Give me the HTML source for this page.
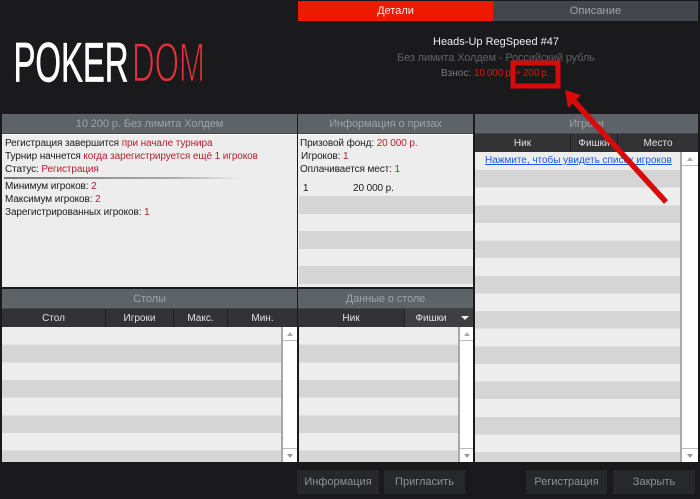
<!DOCTYPE html>
<html lang="ru">
<head>
<meta charset="utf-8">
<style>
*{box-sizing:border-box}
html,body{margin:0;padding:0;background:#1a1a1c}
body{width:700px;height:499px;position:relative;overflow:hidden;font-family:"Liberation Sans",Arial,sans-serif;font-size:10px;letter-spacing:-.1px;color:#1a1a1a}
.a{position:absolute}
.t{position:absolute;white-space:nowrap;line-height:14px}
.r{color:#b5202c}
.title{position:absolute;background:#5d6367;border-bottom:1px solid #40464a;color:#9ea3a6;text-align:center;font-size:11px;line-height:21px;height:20px;letter-spacing:-.1px}
.hd{position:absolute;background:#333335;color:#e2e2e2;text-align:center;line-height:19px;height:18px;border-right:1px solid #1f1f21;letter-spacing:0}
.btn{position:absolute;top:470px;height:24px;background:#27282c;color:#8e9094;font-size:11px;line-height:25px;text-align:center;letter-spacing:0}
.sb{position:absolute;background:#fff;border-left:2px solid #a8a8a8}
.up,.dn{position:absolute;left:0;right:0;height:14px;background:#fff}
.up{top:0;border-bottom:1px solid #bbb}
.dn{bottom:0;border-top:1px solid #bbb}
.up:after,.dn:after{content:"";position:absolute;left:50%;margin-left:-3px;width:0;height:0;border-left:3px solid transparent;border-right:3px solid transparent}
.up:after{top:5px;border-bottom:4px solid #aaa}
.dn:after{top:5px;border-top:4px solid #999}
.st1{background:repeating-linear-gradient(to bottom,#ededed 0,#ededed 17.67px,#d5d5d5 17.67px,#d5d5d5 35.33px)}
.st2{background:repeating-linear-gradient(to bottom,#d5d5d5 0,#d5d5d5 17.63px,#ededed 17.63px,#ededed 35.26px)}
</style>
</head>
<body>
<!-- tabs -->
<div class="a" style="left:298px;top:1px;width:195px;height:20px;background:#ee1a00;color:#f5ecea;text-align:center;font-size:11px;letter-spacing:0;line-height:20px">Детали</div>
<div class="a" style="left:493px;top:1px;width:205px;height:20px;background:#43474d;color:#a2a5a9;text-align:center;font-size:11px;letter-spacing:.1px;line-height:20px">Описание</div>

<!-- logo -->
<svg class="a" style="left:0;top:30px" width="220" height="60" viewBox="0 0 220 60">
<text x="13.5" y="51.5" font-family="Liberation Sans" font-size="56" fill="#fff" stroke="#fff" stroke-width=".7" textLength="115" lengthAdjust="spacingAndGlyphs">POKER</text>
<text x="132" y="51.5" font-family="Liberation Sans" font-size="56" fill="#e8303c" stroke="#1a1a1c" stroke-width="1.7" textLength="73" lengthAdjust="spacingAndGlyphs">DOM</text>
</svg>

<!-- tournament info -->
<div class="t" style="left:433px;top:35px;color:#eee;font-size:11px;letter-spacing:0">Heads-Up RegSpeed #47</div>
<div class="t" style="left:397px;top:51px;color:#5f6165;font-size:11px;letter-spacing:-.13px">Без лимита Холдем - Российский рубль</div>
<div class="t" style="left:441px;top:67px;color:#77797d;font-size:10px;letter-spacing:0">Взнос:</div>
<div class="t" style="left:474px;top:67px;color:#d8180c;font-size:10px;letter-spacing:-.02px;word-spacing:-1px">10 000 р. + 200 р.</div>

<!-- top left panel -->
<div class="title" style="left:2px;top:114px;width:295px">10 200 р. Без лимита Холдем</div>
<div class="a" style="left:2px;top:134px;width:295px;height:153px;background:#ededed;border-top:1px solid #fff"></div>
<div class="t" style="left:5px;top:137px">Регистрация завершится <span class="r">при начале турнира</span></div>
<div class="t" style="left:5px;top:150px">Турнир начнется <span class="r">когда зарегистрируется ещё 1 игроков</span></div>
<div class="t" style="left:5px;top:163px">Статус: <span class="r">Регистрация</span></div>
<div class="a" style="left:4px;top:177px;width:238px;height:2px;background:linear-gradient(to right,#777,#aaa 70%,#ededed)"></div>
<div class="t" style="left:5px;top:180px">Минимум игроков: <span class="r">2</span></div>
<div class="t" style="left:5px;top:193px">Максимум игроков: <span class="r">2</span></div>
<div class="t" style="left:5px;top:206px">Зарегистрированных игроков: <span class="r">1</span></div>

<!-- top middle panel -->
<div class="title" style="left:298px;top:114px;width:175px">Информация о призах</div>
<div class="a" style="left:298px;top:134px;width:175px;height:153px;background:#ededed;border-top:1px solid #fff"></div>
<div class="a" style="left:299px;top:196px;width:174px;height:18px;background:#d5d5d5"></div>
<div class="a" style="left:299px;top:231px;width:174px;height:18px;background:#d5d5d5"></div>
<div class="a" style="left:299px;top:266px;width:174px;height:18px;background:#d5d5d5"></div>
<div class="t" style="left:300px;top:137px">Призовой фонд: <span class="r">20 000 р.</span></div>
<div class="t" style="left:301px;top:150px">Игроков: <span class="r">1</span></div>
<div class="t" style="left:300px;top:163px">Оплачивается мест: <span class="r">1</span></div>
<div class="t" style="left:303px;top:182px">1</div>
<div class="t" style="left:353px;top:182px">20 000 р.</div>

<!-- right panel -->
<div class="title" style="left:475px;top:114px;width:223px">Игроки</div>
<div class="hd" style="left:475px;top:134px;width:96px">Ник</div>
<div class="hd" style="left:571px;top:134px;width:47px">Фишки</div>
<div class="hd" style="left:618px;top:134px;width:80px;border-right:0">Место</div>
<div class="a st2" style="left:475px;top:170px;width:205px;height:292px"></div>
<div class="a" style="left:475px;top:152px;width:205px;height:18px;background:#ededed"></div>
<div class="t" style="left:485px;top:154px;color:#1a55e8;text-decoration:underline;letter-spacing:-.02px">Нажмите, чтобы увидеть список игроков</div>
<div class="sb" style="left:680px;top:152px;width:18px;height:310px"><div class="up"></div><div class="dn"></div></div>

<!-- bottom left -->
<div class="title" style="left:2px;top:289px;width:295px">Столы</div>
<div class="hd" style="left:2px;top:309px;width:104px">Стол</div>
<div class="hd" style="left:106px;top:309px;width:68px">Игроки</div>
<div class="hd" style="left:174px;top:309px;width:54px">Макс.</div>
<div class="hd" style="left:228px;top:309px;width:69px;border-right:0">Мин.</div>
<div class="a st1" style="left:2px;top:327px;width:279px;height:135px"></div>
<div class="sb" style="left:281px;top:327px;width:16px;height:135px"><div class="up"></div><div class="dn"></div></div>

<!-- bottom middle -->
<div class="title" style="left:298px;top:289px;width:175px">Данные о столе</div>
<div class="hd" style="left:298px;top:309px;width:107px">Ник</div>
<div class="hd" style="left:405px;top:309px;width:68px;background:#3f3f41;border-right:0;padding-right:16px">Фишки</div>
<div class="a" style="left:461px;top:316px;width:8px;height:4px;border-left:4px solid transparent;border-right:4px solid transparent;border-top:4px solid #eee"></div>
<div class="a st1" style="left:299px;top:327px;width:159px;height:135px"></div>
<div class="sb" style="left:458px;top:327px;width:15px;height:135px"><div class="up"></div><div class="dn"></div></div>

<!-- buttons -->
<div class="btn" style="left:297px;width:82px">Информация</div>
<div class="btn" style="left:384px;width:81px">Пригласить</div>
<div class="btn" style="left:526px;width:81px">Регистрация</div>
<div class="btn" style="left:613px;width:82px">Закрыть</div>

<!-- annotation -->
<svg class="a" style="left:0;top:0" width="700" height="499" viewBox="0 0 700 499">
<rect x="513" y="63" width="45" height="23" fill="none" stroke="#d80a0a" stroke-width="5"/>
<path d="M666 202L573 100" stroke="#d80a0a" stroke-width="5.5" fill="none"/>
<path d="M565 90L581 95L568 108Z" fill="#d80a0a"/>
</svg>
</body>
</html>
